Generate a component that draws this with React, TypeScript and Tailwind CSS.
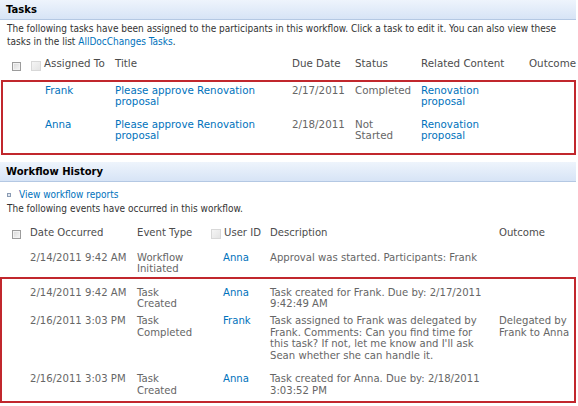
import React from 'react';

const tahoma = "font-['DejaVu_Sans_Condensed','DejaVu_Sans',sans-serif]";
const verdana = "font-['DejaVu_Sans',Verdana,sans-serif]";

const Check = ({ faded = false }: { faded?: boolean }) => (
  <span
    className={
      faded
        ? 'inline-block shrink-0 w-[10px] h-[10px] border border-[#d8d8d8] bg-gradient-to-br from-[#f5f5f5] to-[#e4e4e4]'
        : 'inline-block shrink-0 w-[9px] h-[9px] border border-[#9c9c9c] bg-gradient-to-br from-[#d8d8d8] to-[#f7f7f7] shadow-[inset_0_0_0_1px_#f2f2f2]'
    }
  />
);

const Link = ({ children }: { children: React.ReactNode }) => (
  <span className="text-[#0072bc]">{children}</span>
);

const SectionHeader = ({ title }: { title: string }) => (
  <div className="h-[20px] flex items-center px-[6px] bg-gradient-to-b from-[#eef4fc] to-[#d7e4f6] border-b border-[#b4c8e3]">
    <span className={`${verdana} text-[10px] font-bold text-black`}>{title}</span>
  </div>
);

const Lines = ({ lines }: { lines: string[] }) => (
  <div>
    {lines.map((l) => (
      <div key={l}>{l}</div>
    ))}
  </div>
);

const tasks = [
  { who: 'Frank', due: '2/17/2011', status: ['Completed'], pad: 'pt-[2.5px] pb-[7px]' },
  { who: 'Anna', due: '2/18/2011', status: ['Not', 'Started'], pad: 'pt-[5px] pb-[11px]' },
];

const taskCols = 'grid grid-cols-[28px_84px_177px_63px_66px_108px_1fr]';
const histCols = 'grid grid-cols-[28px_107px_74px_59px_229px_1fr]';

type Event = {
  date: string;
  type: string[];
  user: string;
  desc: string[];
  outcome: string[];
  pad: string;
};

const history: Event[] = [
  {
    date: '2/14/2011 9:42 AM',
    type: ['Task', 'Created'],
    user: 'Anna',
    desc: ['Task created for Frank. Due by: 2/17/2011', '9:42:49 AM'],
    outcome: [],
    pad: 'pt-[8px]',
  },
  {
    date: '2/16/2011 3:03 PM',
    type: ['Task', 'Completed'],
    user: 'Frank',
    desc: [
      'Task assigned to Frank was delegated by',
      'Frank. Comments: Can you find time for',
      "this task? If not, let me know and I'll ask",
      'Sean whether she can handle it.',
    ],
    outcome: ['Delegated by', 'Frank to Anna'],
    pad: 'pt-[5px]',
  },
  {
    date: '2/16/2011 3:03 PM',
    type: ['Task', 'Created'],
    user: 'Anna',
    desc: ['Task created for Anna. Due by: 2/18/2011', '3:03:52 PM'],
    outcome: [],
    pad: 'pt-[11.5px] pb-[4.5px]',
  },
];

const HistoryRow = ({ h }: { h: Event }) => (
  <div className={`${histCols} ${h.pad}`}>
    <div />
    <div>{h.date}</div>
    <Lines lines={h.type} />
    <div className="pl-[12px]">
      <Link>{h.user}</Link>
    </div>
    <Lines lines={h.desc} />
    <Lines lines={h.outcome} />
  </div>
);

export default function App() {
  return (
    <div className="w-[578px] h-[406px] overflow-hidden bg-white">
      {/* Tasks */}
      <div className="pr-[2px]">
        <SectionHeader title="Tasks" />
      </div>
      <div className={`${tahoma} text-[10px] leading-[12.5px] text-[#333] px-[7px] pt-[3px]`}>
        The following tasks have been assigned to the participants in this workflow. Click a task to edit it. You can also view these
        tasks in the list <Link>AllDocChanges Tasks</Link>.
      </div>

      <div className={`${verdana} text-[10.3px] leading-[11.3px] text-[#666] ml-[1px] mr-[2px] mt-[5px]`}>
        <div className={`${taskCols} items-center border-x-2 border-transparent h-[22px] text-[#4c4c4c]`}>
          <div className="pl-[9px] flex">
            <span className="mt-[5px] flex">
              <Check />
            </span>
          </div>
          <div className="flex items-center gap-[3px]">
            <span className="mt-[4px] flex">
              <Check faded />
            </span>
            Assigned To
          </div>
          <div>Title</div>
          <div>Due Date</div>
          <div>Status</div>
          <div>Related Content</div>
          <div>Outcome</div>
        </div>
        <div className="border-2 border-[#c1272d] mt-[5px]">
          {tasks.map((t) => (
            <div key={t.who} className={`${taskCols} ${t.pad}`}>
              <div />
              <div className="pl-[14px]">
                <Link>{t.who}</Link>
              </div>
              <div>
                <Link>
                  Please approve Renovation
                  <br />
                  proposal
                </Link>
              </div>
              <div>{t.due}</div>
              <Lines lines={t.status} />
              <div>
                <Link>
                  Renovation
                  <br />
                  proposal
                </Link>
              </div>
              <div />
            </div>
          ))}
        </div>
      </div>

      {/* Workflow History */}
      <div className="pr-[2px] mt-[7px]">
        <SectionHeader title="Workflow History" />
      </div>
      <div className={`${tahoma} text-[10px] leading-[12.5px] text-[#333] px-[7px] pt-[7px]`}>
        <div className="flex items-center gap-[8px]">
          <span className="inline-block w-[4px] h-[4px] border border-[#8a9bb3] bg-[#e4eaf2]" />
          <Link>View workflow reports</Link>
        </div>
        <div className="mt-[2px]">The following events have occurred in this workflow.</div>
      </div>

      <div className={`${verdana} text-[10.1px] leading-[11.7px] text-[#666] mr-[2px] mt-[6px]`}>
        <div className={`${histCols} items-center border-x-2 border-transparent h-[23px] text-[#4c4c4c]`}>
          <div className="pl-[10px] flex">
            <span className="mt-[3px] flex">
              <Check />
            </span>
          </div>
          <div>Date Occurred</div>
          <div>Event Type</div>
          <div className="flex items-center gap-[3px]">
            <span className="mt-[2px] flex">
              <Check faded />
            </span>
            User ID
          </div>
          <div>Description</div>
          <div>Outcome</div>
        </div>
        <div className="border-x-2 border-transparent">
          <HistoryRow
            h={{
              date: '2/14/2011 9:42 AM',
              type: ['Workflow', 'Initiated'],
              user: 'Anna',
              desc: ['Approval was started. Participants: Frank'],
              outcome: [],
              pad: 'pt-[7px] pb-[1.5px]',
            }}
          />
        </div>
        <div className="border-2 border-[#c1272d]">
          {history.map((h, i) => (
            <HistoryRow key={i} h={h} />
          ))}
        </div>
      </div>
    </div>
  );
}
